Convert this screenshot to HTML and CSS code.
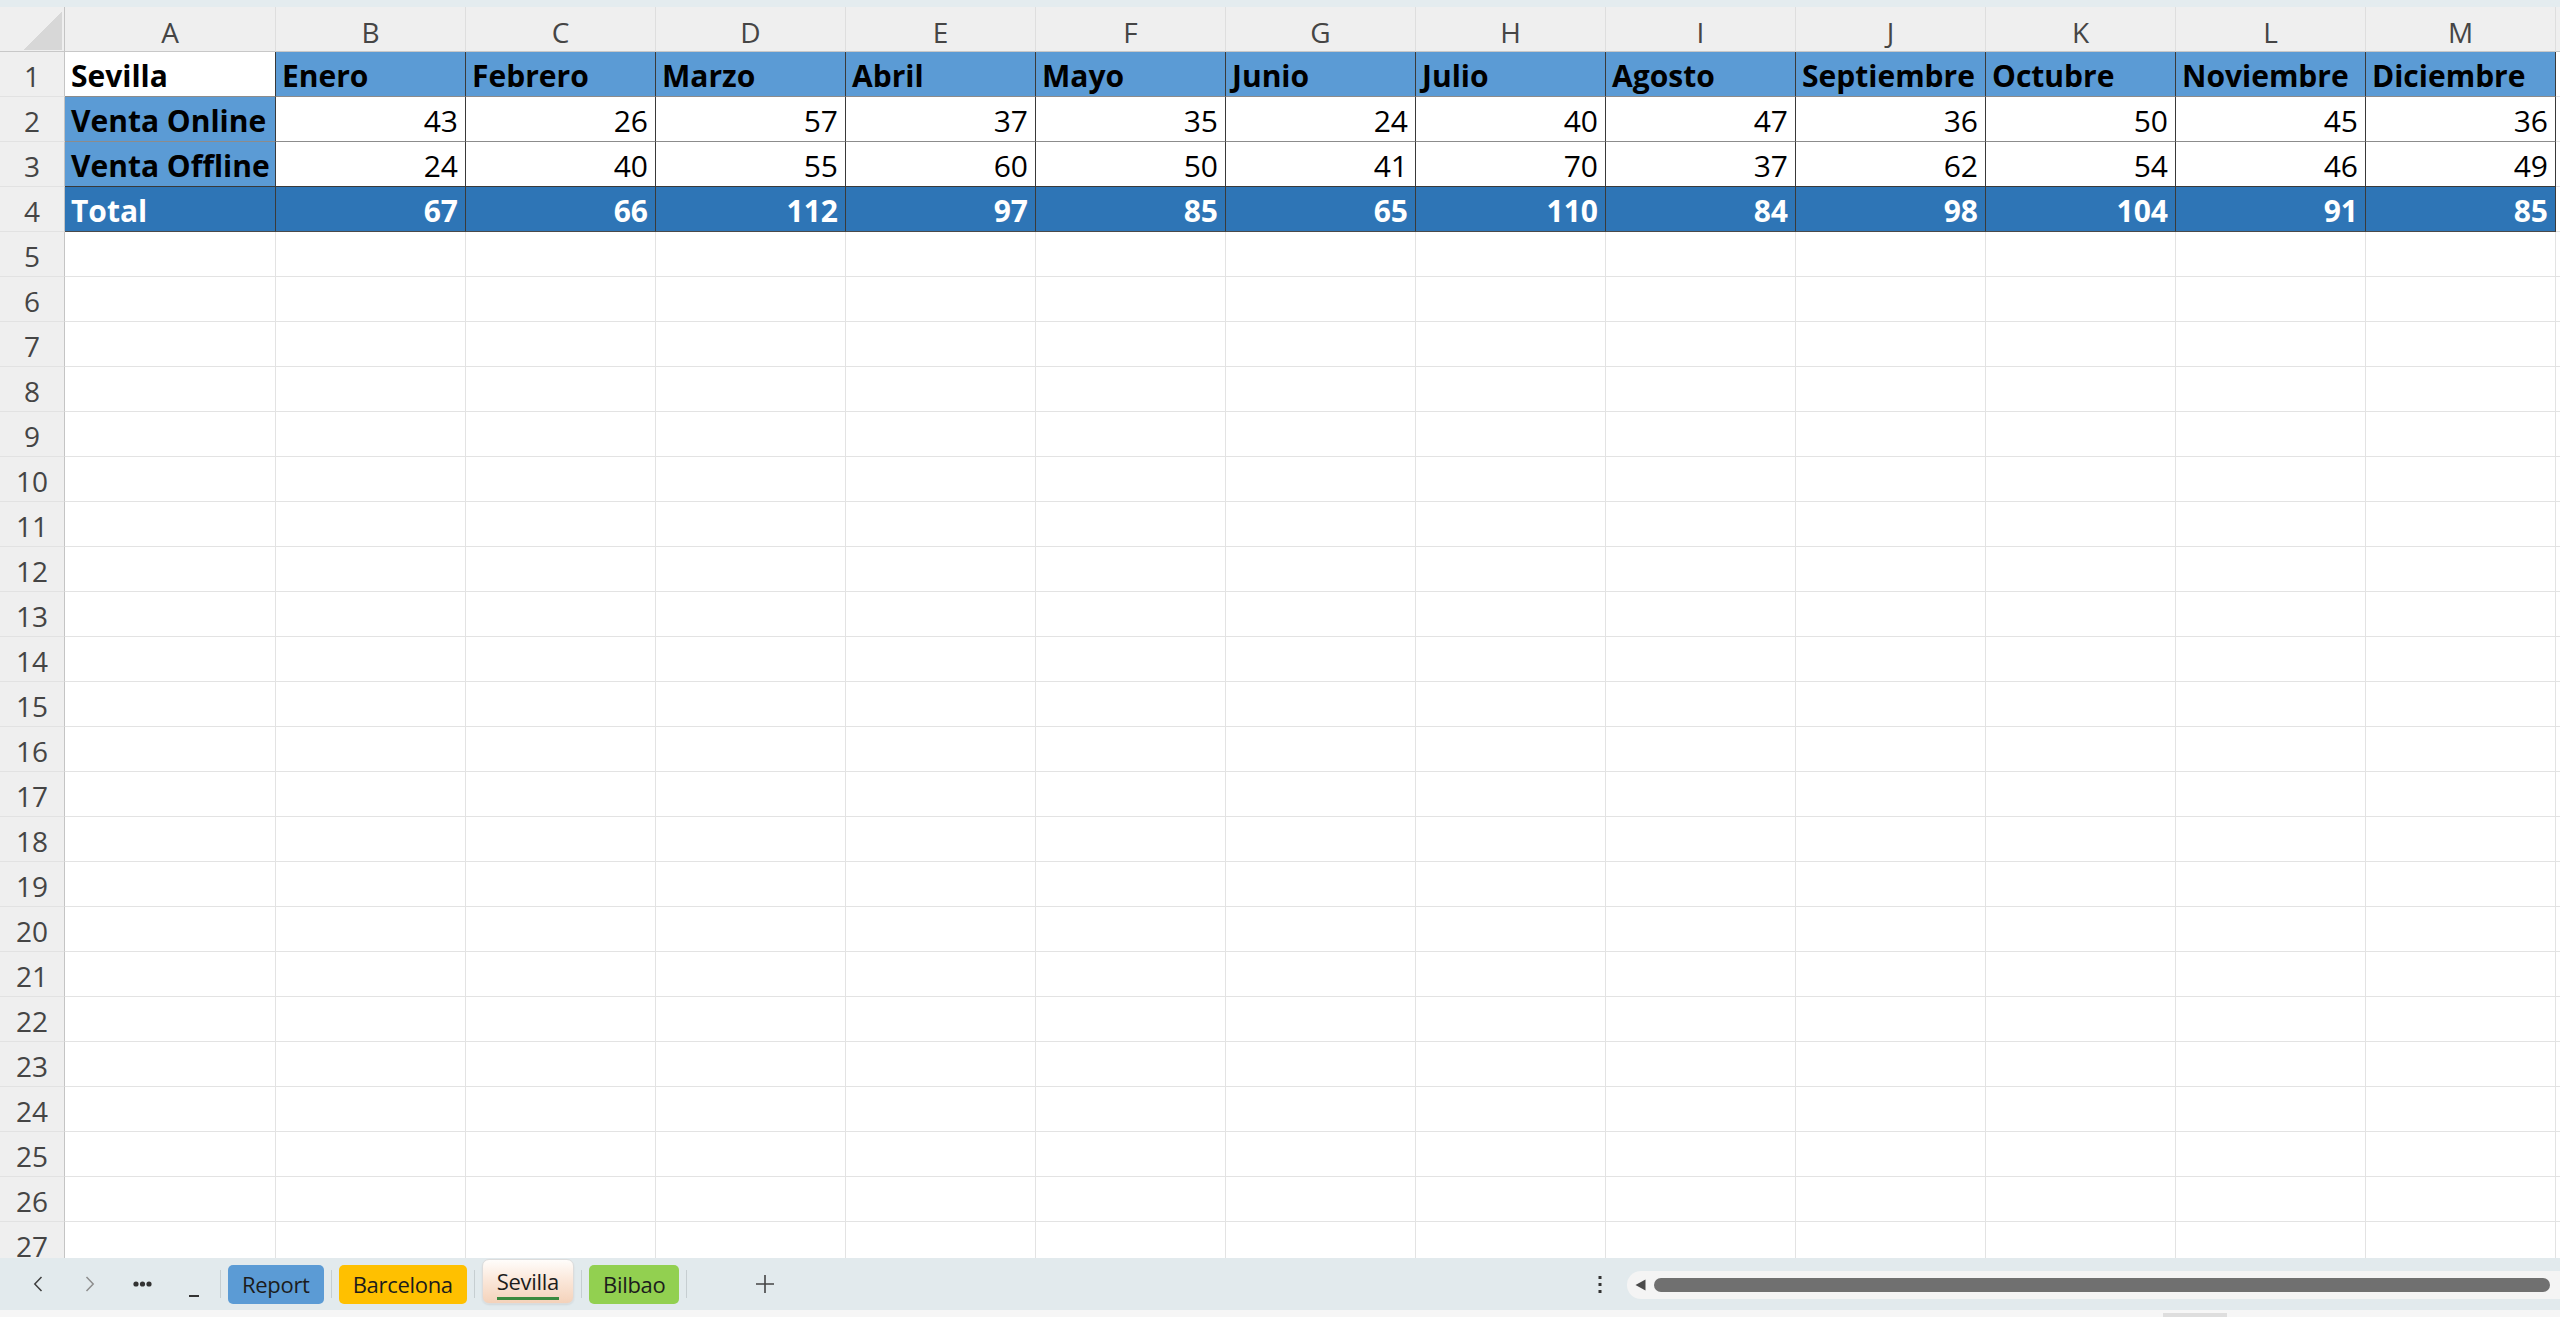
FILE: index.html
```html
<!DOCTYPE html>
<html lang="es">
<head>
<meta charset="utf-8">
<title>Ventas Sevilla</title>
<link rel="stylesheet" href="styles.css">
</head>
<body>
<div class="app">
  <div class="topstrip"></div>

  <div class="sheet">
    <div class="row colhead">
      <div class="corner"><span class="tri"></span></div>
      <div>A</div><div>B</div><div>C</div><div>D</div><div>E</div><div>F</div><div>G</div>
      <div>H</div><div>I</div><div>J</div><div>K</div><div>L</div><div>M</div><div class="fill"></div>
    </div>

    <div class="row r1">
      <div class="rh">1</div>
      <div class="d b">Sevilla</div>
      <div class="d b hdr">Enero</div>
      <div class="d b hdr">Febrero</div>
      <div class="d b hdr">Marzo</div>
      <div class="d b hdr">Abril</div>
      <div class="d b hdr">Mayo</div>
      <div class="d b hdr">Junio</div>
      <div class="d b hdr">Julio</div>
      <div class="d b hdr">Agosto</div>
      <div class="d b hdr">Septiembre</div>
      <div class="d b hdr">Octubre</div>
      <div class="d b hdr">Noviembre</div>
      <div class="d b hdr">Diciembre</div>
      <div class="fill"></div>
    </div>

    <div class="row r2">
      <div class="rh">2</div>
      <div class="d b hdr">Venta Online</div>
      <div class="d n">43</div><div class="d n">26</div><div class="d n">57</div><div class="d n">37</div>
      <div class="d n">35</div><div class="d n">24</div><div class="d n">40</div><div class="d n">47</div>
      <div class="d n">36</div><div class="d n">50</div><div class="d n">45</div><div class="d n">36</div>
      <div class="fill"></div>
    </div>

    <div class="row r3">
      <div class="rh">3</div>
      <div class="d b hdr">Venta Offline</div>
      <div class="d n">24</div><div class="d n">40</div><div class="d n">55</div><div class="d n">60</div>
      <div class="d n">50</div><div class="d n">41</div><div class="d n">70</div><div class="d n">37</div>
      <div class="d n">62</div><div class="d n">54</div><div class="d n">46</div><div class="d n">49</div>
      <div class="fill"></div>
    </div>

    <div class="row r4">
      <div class="rh">4</div>
      <div class="d b tot">Total</div>
      <div class="d n tot">67</div><div class="d n tot">66</div><div class="d n tot">112</div><div class="d n tot">97</div>
      <div class="d n tot">85</div><div class="d n tot">65</div><div class="d n tot">110</div><div class="d n tot">84</div>
      <div class="d n tot">98</div><div class="d n tot">104</div><div class="d n tot">91</div><div class="d n tot">85</div>
      <div class="fill"></div>
    </div>

    <div class="row"><div class="rh">5</div><div></div><div></div><div></div><div></div><div></div><div></div><div></div><div></div><div></div><div></div><div></div><div></div><div></div><div class="fill"></div></div>
    <div class="row"><div class="rh">6</div><div></div><div></div><div></div><div></div><div></div><div></div><div></div><div></div><div></div><div></div><div></div><div></div><div></div><div class="fill"></div></div>
    <div class="row"><div class="rh">7</div><div></div><div></div><div></div><div></div><div></div><div></div><div></div><div></div><div></div><div></div><div></div><div></div><div></div><div class="fill"></div></div>
    <div class="row"><div class="rh">8</div><div></div><div></div><div></div><div></div><div></div><div></div><div></div><div></div><div></div><div></div><div></div><div></div><div></div><div class="fill"></div></div>
    <div class="row"><div class="rh">9</div><div></div><div></div><div></div><div></div><div></div><div></div><div></div><div></div><div></div><div></div><div></div><div></div><div></div><div class="fill"></div></div>
    <div class="row"><div class="rh">10</div><div></div><div></div><div></div><div></div><div></div><div></div><div></div><div></div><div></div><div></div><div></div><div></div><div></div><div class="fill"></div></div>
    <div class="row"><div class="rh">11</div><div></div><div></div><div></div><div></div><div></div><div></div><div></div><div></div><div></div><div></div><div></div><div></div><div></div><div class="fill"></div></div>
    <div class="row"><div class="rh">12</div><div></div><div></div><div></div><div></div><div></div><div></div><div></div><div></div><div></div><div></div><div></div><div></div><div></div><div class="fill"></div></div>
    <div class="row"><div class="rh">13</div><div></div><div></div><div></div><div></div><div></div><div></div><div></div><div></div><div></div><div></div><div></div><div></div><div></div><div class="fill"></div></div>
    <div class="row"><div class="rh">14</div><div></div><div></div><div></div><div></div><div></div><div></div><div></div><div></div><div></div><div></div><div></div><div></div><div></div><div class="fill"></div></div>
    <div class="row"><div class="rh">15</div><div></div><div></div><div></div><div></div><div></div><div></div><div></div><div></div><div></div><div></div><div></div><div></div><div></div><div class="fill"></div></div>
    <div class="row"><div class="rh">16</div><div></div><div></div><div></div><div></div><div></div><div></div><div></div><div></div><div></div><div></div><div></div><div></div><div></div><div class="fill"></div></div>
    <div class="row"><div class="rh">17</div><div></div><div></div><div></div><div></div><div></div><div></div><div></div><div></div><div></div><div></div><div></div><div></div><div></div><div class="fill"></div></div>
    <div class="row"><div class="rh">18</div><div></div><div></div><div></div><div></div><div></div><div></div><div></div><div></div><div></div><div></div><div></div><div></div><div></div><div class="fill"></div></div>
    <div class="row"><div class="rh">19</div><div></div><div></div><div></div><div></div><div></div><div></div><div></div><div></div><div></div><div></div><div></div><div></div><div></div><div class="fill"></div></div>
    <div class="row"><div class="rh">20</div><div></div><div></div><div></div><div></div><div></div><div></div><div></div><div></div><div></div><div></div><div></div><div></div><div></div><div class="fill"></div></div>
    <div class="row"><div class="rh">21</div><div></div><div></div><div></div><div></div><div></div><div></div><div></div><div></div><div></div><div></div><div></div><div></div><div></div><div class="fill"></div></div>
    <div class="row"><div class="rh">22</div><div></div><div></div><div></div><div></div><div></div><div></div><div></div><div></div><div></div><div></div><div></div><div></div><div></div><div class="fill"></div></div>
    <div class="row"><div class="rh">23</div><div></div><div></div><div></div><div></div><div></div><div></div><div></div><div></div><div></div><div></div><div></div><div></div><div></div><div class="fill"></div></div>
    <div class="row"><div class="rh">24</div><div></div><div></div><div></div><div></div><div></div><div></div><div></div><div></div><div></div><div></div><div></div><div></div><div></div><div class="fill"></div></div>
    <div class="row"><div class="rh">25</div><div></div><div></div><div></div><div></div><div></div><div></div><div></div><div></div><div></div><div></div><div></div><div></div><div></div><div class="fill"></div></div>
    <div class="row"><div class="rh">26</div><div></div><div></div><div></div><div></div><div></div><div></div><div></div><div></div><div></div><div></div><div></div><div></div><div></div><div class="fill"></div></div>
    <div class="row"><div class="rh">27</div><div></div><div></div><div></div><div></div><div></div><div></div><div></div><div></div><div></div><div></div><div></div><div></div><div></div><div class="fill"></div></div>
  </div>

  <div class="tabbar">
    <div class="nav">
      <div class="navbtn"><svg width="10" height="16" viewBox="0 0 10 16"><polyline points="8.5,1 1.8,8 8.5,15" fill="none" stroke="#3f3f3f" stroke-width="1.5"/></svg></div>
      <div class="navbtn"><svg width="10" height="16" viewBox="0 0 10 16"><polyline points="1.5,1 8.2,8 1.5,15" fill="none" stroke="#8d8d8d" stroke-width="1.5"/></svg></div>
      <div class="navbtn"><svg width="19" height="6" viewBox="0 0 19 6"><circle cx="3" cy="3" r="2.6" fill="#333"/><circle cx="9.5" cy="3" r="2.6" fill="#333"/><circle cx="16" cy="3" r="2.6" fill="#333"/></svg></div>
      <div class="navbtn low"><span class="dash"></span></div>
    </div>
    <div class="tabs">
      <span class="sep"></span>
      <div class="tab blue">Report</div>
      <span class="sep"></span>
      <div class="tab gold">Barcelona</div>
      <span class="sep"></span>
      <div class="tab active"><span class="label">Sevilla</span></div>
      <span class="sep"></span>
      <div class="tab green">Bilbao</div>
      <span class="sep"></span>
    </div>
    <div class="addbtn"><svg width="20" height="20" viewBox="0 0 20 20"><path d="M10 1V19M1 10H19" stroke="#444" stroke-width="1.6" fill="none"/></svg></div>
    <div class="spacer"></div>
    <div class="more"><svg width="4" height="17" viewBox="0 0 4 17"><rect x="0.5" y="0" width="3" height="3" fill="#333"/><rect x="0.5" y="7" width="3" height="3" fill="#333"/><rect x="0.5" y="14" width="3" height="3" fill="#333"/></svg></div>
    <div class="track">
      <svg class="arrow" width="11" height="12" viewBox="0 0 11 12"><path d="M0.5 6L10.5 0.5V11.5Z" fill="#4a4a4a"/></svg>
      <div class="thumb"></div>
    </div>
  </div>

  <div class="bottomstrip"><span class="grip"></span></div>
</div>
</body>
</html>
```
FILE: styles.css
```css
* {
  box-sizing: border-box;
  margin: 0;
  padding: 0;
}

html,
body {
  width: 2560px;
  height: 1317px;
  overflow: hidden;
  background: #ffffff;
  font-family: "Open Sans", "Noto Sans", sans-serif;
}

.app {
  display: flex;
  flex-direction: column;
  height: 1317px;
}

.topstrip {
  flex: none;
  height: 7px;
  background: #e4ecef;
}

/* ---------- grid ---------- */
.sheet {
  flex: none;
  height: 1251px;
  overflow: hidden;
  background: #ffffff;
}

.row {
  display: grid;
  grid-template-columns: 65px 211px repeat(12, 190px) 1fr;
  height: 45px;
}

.row > div {
  border-right: 1px solid #e3e3e3;
  border-bottom: 1px solid #e3e3e3;
  overflow: hidden;
  white-space: nowrap;
}

.row > .fill {
  border-right: none;
}

/* column letters */
.colhead > div {
  background: #efefef;
  border-bottom-color: #c8c8c8;
  border-right-color: #dedede;
  font-size: 28px;
  color: #454545;
  text-align: center;
  line-height: 36px;
  padding-top: 7px;
}

.colhead > .corner {
  display: flex;
  justify-content: flex-end;
  align-items: flex-end;
  padding: 0 2px 1px 0;
  border-right-color: #c4c4c4;
}

.tri {
  display: block;
  width: 39px;
  height: 38px;
  background: linear-gradient(to bottom right, transparent 50%, #d7d7d7 50%);
}

/* row numbers */
.row > .rh {
  background: #efefef;
  border-right-color: #c4c4c4;
  border-bottom-color: #e2e2e2;
  font-size: 28px;
  color: #454545;
  text-align: center;
  line-height: 38px;
  padding-top: 5px;
}

/* data cells */
.row > .d {
  font-size: 30px;
  line-height: 40px;
  padding: 4px 7px 0 6px;
  color: #000000;
  border-right-color: #3a3a3a;
  border-bottom-color: #8c8c8c;
}

.row > .n {
  text-align: right;
}

.b {
  font-weight: 700;
}

.row > .hdr {
  background: #5b9bd5;
}

.r3 > .d {
  border-bottom-color: #3a3a3a;
}

.row > .tot {
  background: #2e75b6;
  color: #ffffff;
  font-weight: 700;
  border-bottom-color: #4a4a4a;
}

/* ---------- sheet tabs ---------- */
.tabbar {
  flex: none;
  height: 52px;
  display: flex;
  align-items: center;
  padding-left: 12px;
  background: #e2eaed;
  overflow: hidden;
}

.nav {
  display: flex;
  align-items: center;
  height: 100%;
}

.navbtn {
  width: 52px;
  height: 100%;
  display: flex;
  align-items: center;
  justify-content: center;
}

.navbtn svg {
  display: block;
}

.navbtn.low {
  align-items: flex-end;
  padding-bottom: 13px;
}

.dash {
  display: block;
  width: 10px;
  height: 2px;
  background: #333333;
}

.tabs {
  display: flex;
  align-items: center;
  gap: 7px;
  align-self: stretch;
}

.sep {
  display: block;
  width: 1px;
  height: 28px;
  background: #c6ced1;
}

.tab {
  height: 39px;
  padding: 0 14px;
  border-radius: 5px;
  font-size: 22px;
  letter-spacing: -0.3px;
  line-height: 39px;
  color: #1c1c1c;
  white-space: nowrap;
}

.tab.blue {
  background: #5b9bd5;
}

.tab.gold {
  background: #ffc000;
}

.tab.green {
  background: #92d050;
}

.tab.active {
  align-self: flex-start;
  height: 45px;
  margin-top: 1px;
  display: flex;
  flex-direction: column;
  align-items: center;
  padding-top: 6px;
  border-radius: 7px;
  border: 1px solid #dcdcdc;
  background: linear-gradient(to bottom, #fffdfb 0%, #fbe8db 45%, #f4d2ba 100%);
  box-shadow: 0 1px 2px rgba(0, 0, 0, 0.08);
}

.tab.active .label {
  display: block;
  line-height: 30px;
  padding-bottom: 1px;
  border-bottom: 3px solid #3b8a3f;
}

.addbtn {
  width: 53px;
  height: 100%;
  margin-left: 51px;
  display: flex;
  align-items: center;
  justify-content: center;
}

.addbtn svg {
  display: block;
}

.spacer {
  flex: 1;
}

.more {
  width: 24px;
  margin-right: 15px;
  display: flex;
  justify-content: center;
}

.more svg {
  display: block;
}

.track {
  flex: none;
  width: 933px;
  height: 28px;
  margin-top: 2px;
  display: flex;
  align-items: center;
  padding-left: 8px;
  background: #f4f4f4;
  border-radius: 14px 0 0 14px;
}

.arrow {
  display: block;
  flex: none;
}

.thumb {
  width: 896px;
  height: 14px;
  margin-left: 8px;
  border-radius: 7px;
  background: #707070;
}

.bottomstrip {
  flex: none;
  height: 7px;
  display: flex;
  align-items: flex-end;
  background: #f6f6f6;
}

.grip {
  display: block;
  width: 64px;
  height: 4px;
  margin-left: 2163px;
  background: #dedede;
}
```
